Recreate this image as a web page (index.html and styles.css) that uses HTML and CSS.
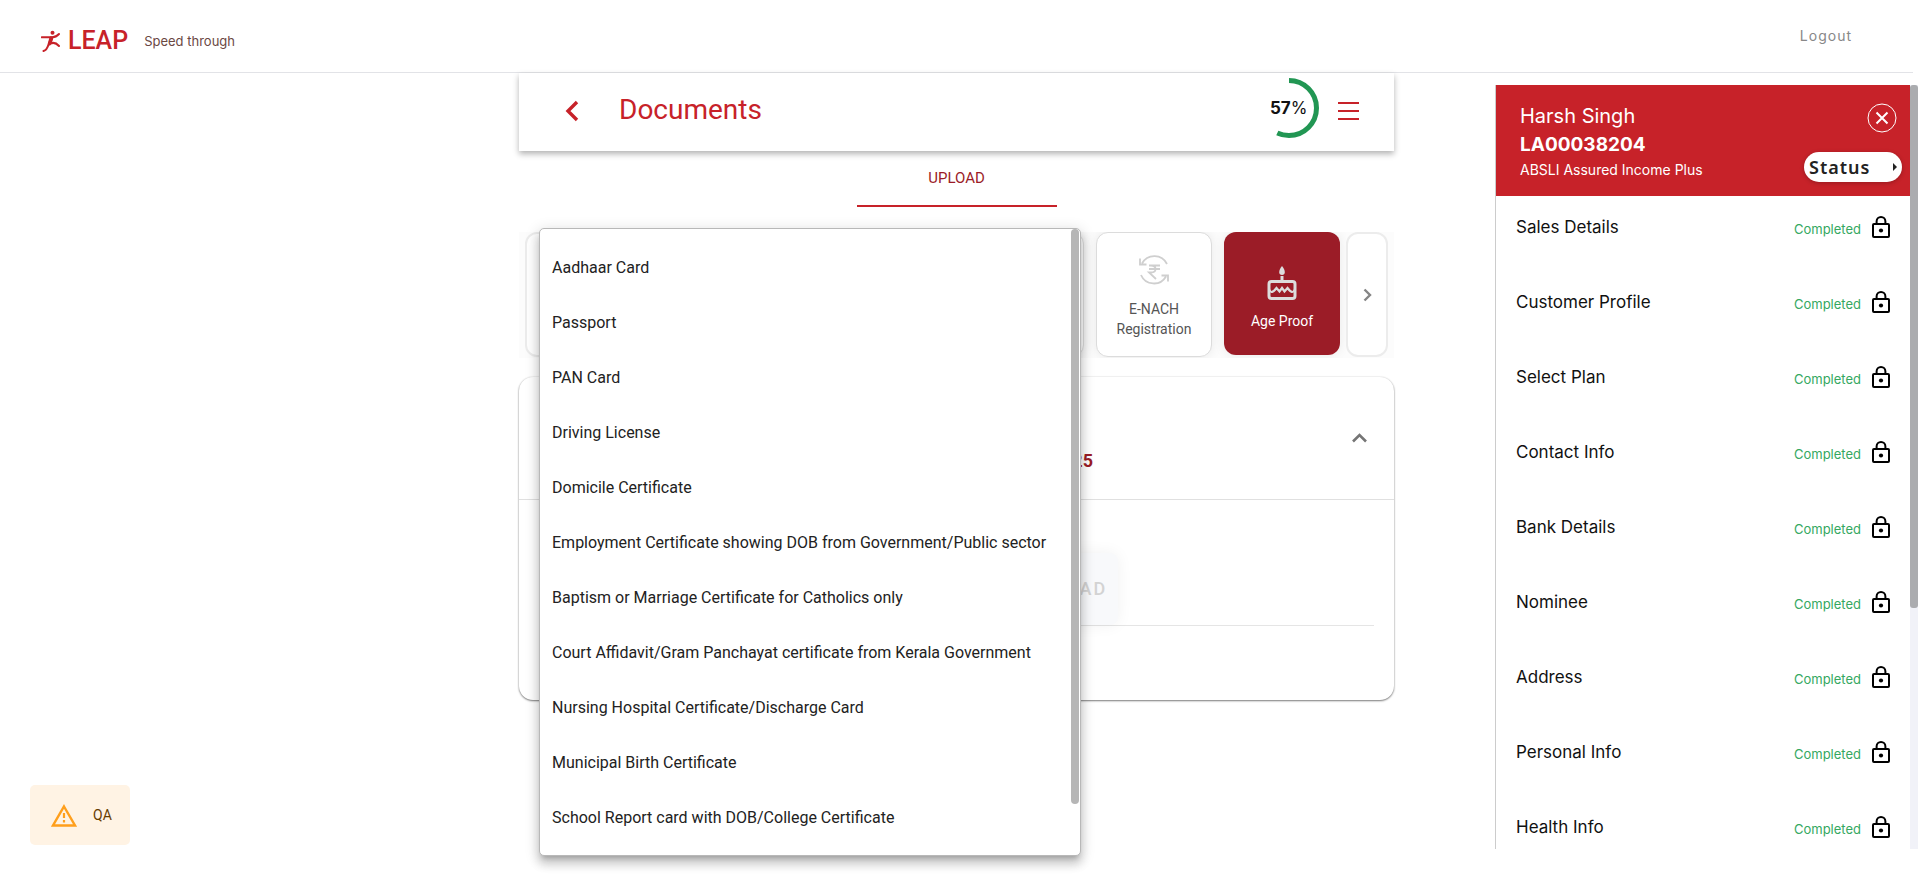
FILE: index.html
```html
<!DOCTYPE html>
<html lang="en">
<head>
<meta charset="utf-8">
<meta name="viewport" content="width=device-width, initial-scale=1">
<title>LEAP - Documents</title>
<link rel="stylesheet" href="styles.css">
</head>
<body>
<svg class="defs" width="0" height="0" aria-hidden="true">
  <symbol id="lock" viewBox="0 0 18 22">
    <path d="M4.600 8V5.400a4.400 4.400 0 0 1 8.800 0V8" fill="none" stroke="currentColor" stroke-width="2"/>
    <rect x="1" y="8" width="16" height="13" rx="1" fill="none" stroke="currentColor" stroke-width="2"/>
    <circle cx="9" cy="14.500" r="2.100" fill="currentColor"/>
  </symbol>
</svg>
<header class="topbar">
  <div class="brand">
    <svg class="brand-icon" viewBox="0 0 19 22" width="19" height="22" fill="none" stroke="#c72229" stroke-width="2" stroke-linecap="round" stroke-linejoin="round" aria-hidden="true">
      <circle cx="11.500" cy="2.800" r="2" fill="#c72229" stroke="none"/>
      <path d="M.8 7.200H11.500Q15 7.200 18 4"/>
      <path d="M9.500 7.500 7.500 14.500Q6 20 2.500 21"/>
      <path d="M11.500 7.500 9.500 13.500Q14 11.500 18 16"/>
      <path d="M10.500 8 8.500 14" stroke-width="3"/>
    </svg>
    <span class="brand-name">LEAP</span>
    <span class="brand-tag">Speed through</span>
  </div>
  <button class="logout" type="button">Logout</button>
</header>

<div class="page">
  <div class="notice" role="status">
    <svg viewBox="0 0 26 23" width="26" height="23" aria-hidden="true">
      <path d="M13 2.500 24 21.500H2Z" fill="none" stroke="#ff9f1c" stroke-width="2.400"/>
      <path d="M13 9v5M13 16v2.500" stroke="#ff9f1c" stroke-width="2.200"/>
    </svg>
    <span>QA</span>
  </div>

  <main class="main">
    <div class="titlebar">
      <button class="icon-btn" type="button" aria-label="Back">
        <svg viewBox="0 0 14 22" width="14" height="22"><path d="M12 2 3 11l9 9" fill="none" stroke="#c72229" stroke-width="3.400"/></svg>
      </button>
      <h1>Documents</h1>
      <div class="progress">
        <svg viewBox="0 0 60 60" width="60" height="60" aria-hidden="true">
          <circle cx="30" cy="30" r="27.500" fill="none" stroke="#219653" stroke-width="5" pathLength="100" stroke-dasharray="57 100" transform="rotate(-90 30 30)"/>
        </svg>
        <span class="progress-text"><b>57</b>%</span>
      </div>
      <button class="icon-btn" type="button" aria-label="Menu">
        <svg viewBox="0 0 21 18" width="21" height="18"><path d="M0 1h21M0 9h21M0 17h21" stroke="#c72229" stroke-width="2"/></svg>
      </button>
    </div>

    <div class="tabs"><button class="tab" type="button">UPLOAD</button></div>

    <div class="strip">
      <button class="nav-btn" type="button" aria-label="Previous"></button>
      <div class="tiles">
        <button class="tile" type="button" aria-label="Document"></button>
        <button class="tile" type="button">
          <svg viewBox="0 0 30 30" width="30" height="30" fill="none" stroke="#cfcfcf" stroke-width="1.800" aria-hidden="true">
            <path d="M28 9A14 14 0 0 0 3 8.500M1 3.500V9.500H7.500M2 20a14 14 0 0 0 25 1.500M22.500 20.500H29V26.500"/>
            <path d="M10 10.500H21M10 14H21M12 10.500C18 10.500 18 17.500 12 17.500H10L17 24"/>
          </svg>
          <span>E-NACH Registration</span>
        </button>
        <button class="tile tile-active" type="button">
          <svg viewBox="0 0 30 34" width="30" height="34" fill="none" stroke="#dcdcdc" stroke-width="3" aria-hidden="true">
            <path d="M15 0C19 5 18.500 9 15 9S11 5 15 0Z" fill="#dcdcdc" stroke="none"/>
            <path d="M15 10v5"/>
            <rect x="2" y="15.500" width="26" height="17" rx="2.500"/>
            <path d="M2 23.500C4 27.500 6 26.500 9.500 22L12.500 25.500 15 22 17.500 25.500 20.500 22C24 26.500 26 27.500 28 23.500" stroke-width="2.200"/>
          </svg>
          <span>Age Proof</span>
        </button>
      </div>
      <button class="nav-btn" type="button" aria-label="Next">
        <svg viewBox="0 0 9 14" width="9" height="14"><path d="M1.500 1.500 7 7 1.500 12.500" fill="none" stroke="#858585" stroke-width="2.400"/></svg>
      </button>
    </div>

    <section class="card">
      <div class="card-head">
        <span class="date">25</span>
        <button class="icon-btn collapse" type="button" aria-label="Collapse">
          <svg viewBox="0 0 15 10" width="15" height="10"><path d="M1 8.500 7.500 2 14 8.500" fill="none" stroke="#757575" stroke-width="2.600"/></svg>
        </button>
      </div>
      <div class="card-body">
        <div class="upload-row"><button class="upload" type="button" disabled>UPLOAD</button></div>
      </div>
    </section>

    <div class="menu">
      <ul class="options" role="listbox" aria-label="Document type">
        <li role="option">Aadhaar Card</li>
        <li role="option">Passport</li>
        <li role="option">PAN Card</li>
        <li role="option">Driving License</li>
        <li role="option">Domicile Certificate</li>
        <li role="option">Employment Certificate showing DOB from Government/Public sector</li>
        <li role="option">Baptism or Marriage Certificate for Catholics only</li>
        <li role="option">Court Affidavit/Gram Panchayat certificate from Kerala Government</li>
        <li role="option">Nursing Hospital Certificate/Discharge Card</li>
        <li role="option">Municipal Birth Certificate</li>
        <li role="option">School Report card with DOB/College Certificate</li>
      </ul>
      <div class="menu-scroll"></div>
    </div>
  </main>

  <aside class="side">
    <div class="side-body">
      <div class="profile">
        <div class="profile-text">
          <div class="name">Harsh Singh</div>
          <div class="lead">LA00038204</div>
          <div class="plan">ABSLI Assured Income Plus</div>
        </div>
        <div class="profile-actions">
          <button class="close" type="button" aria-label="Close">
            <svg viewBox="0 0 30 30" width="30" height="30" fill="none" stroke="#fff"><circle cx="15" cy="15" r="14"/><path d="M9.500 9.500l11 11M20.500 9.500l-11 11" stroke-width="2"/></svg>
          </button>
          <button class="status" type="button">Status
            <svg viewBox="0 0 4 8" width="4" height="8" aria-hidden="true"><path d="M0 0 4 4 0 8Z" fill="#222"/></svg>
          </button>
        </div>
      </div>
      <ul class="steps">
        <li><a href="#">Sales Details</a><span class="done">Completed</span><svg class="lock"><use href="#lock"/></svg></li>
        <li><a href="#">Customer Profile</a><span class="done">Completed</span><svg class="lock"><use href="#lock"/></svg></li>
        <li><a href="#">Select Plan</a><span class="done">Completed</span><svg class="lock"><use href="#lock"/></svg></li>
        <li><a href="#">Contact Info</a><span class="done">Completed</span><svg class="lock"><use href="#lock"/></svg></li>
        <li><a href="#">Bank Details</a><span class="done">Completed</span><svg class="lock"><use href="#lock"/></svg></li>
        <li><a href="#">Nominee</a><span class="done">Completed</span><svg class="lock"><use href="#lock"/></svg></li>
        <li><a href="#">Address</a><span class="done">Completed</span><svg class="lock"><use href="#lock"/></svg></li>
        <li><a href="#">Personal Info</a><span class="done">Completed</span><svg class="lock"><use href="#lock"/></svg></li>
        <li><a href="#">Health Info</a><span class="done">Completed</span><svg class="lock"><use href="#lock"/></svg></li>
      </ul>
    </div>
    <div class="side-scroll"><div class="side-thumb"></div></div>
  </aside>
</div>
</body>
</html>
```
FILE: styles.css
```css
* { box-sizing: border-box; }
body {
  margin: 0;
  padding-right: 7px;
  height: 100vh;
  display: flex;
  flex-direction: column;
  overflow: hidden;
  background: #fff;
  color: #222;
  font-family: Roboto, "Liberation Sans", sans-serif;
}
button { font: inherit; color: inherit; background: none; border: 0; padding: 0; }
ul { list-style: none; margin: 0; padding: 0; }
svg { display: block; flex: none; }
.defs { position: absolute; }

.topbar {
  flex: none;
  display: flex;
  align-items: center;
  justify-content: space-between;
  height: 73px;
  padding: 0 61px 0 41px;
  border-bottom: 1px solid #e2e3e7;
}
.brand { display: flex; align-items: center; padding-top: 9px; }
.brand-name { margin-left: 8px; color: #c72229; font-size: 25px; line-height: 32px; font-weight: 500; }
.brand-tag { margin-left: 16px; color: #6b4843; font: 13px/20px Inter, sans-serif; }
.logout { color: #888; font: 14px/20px Inter, sans-serif; letter-spacing: 1px; }

.page {
  flex: 1;
  min-height: 0;
  display: grid;
  grid-template-columns: minmax(0, 1fr) minmax(0, 875px) minmax(0, 1fr);
}
.notice {
  align-self: end;
  justify-self: start;
  display: flex;
  align-items: center;
  gap: 16px;
  height: 60px;
  margin: 0 0 30px 30px;
  padding: 0 18px 0 21px;
  border-radius: 5px;
  background: #fff3e4;
  color: #663c00;
  font-size: 14px;
  line-height: 24px;
}

.main { position: relative; }
.titlebar {
  display: flex;
  align-items: center;
  height: 78px;
  padding: 0 35px 8px 46px;
  box-shadow: 0 3px 6px rgba(0, 0, 0, .3);
}
.titlebar h1 { flex: 1; margin: 0; padding-left: 40px; padding-top: 4px; color: #c72229; font-size: 28px; line-height: 40px; font-weight: 400; }
.titlebar .icon-btn { padding-top: 5px; }
.progress { display: grid; align-items: center; margin-right: 19px; }
.progress svg, .progress-text { grid-area: 1 / 1; }
.progress-text { padding-left: 11px; color: #111; font: 17px/24px Inter, sans-serif; }

.tabs { display: flex; justify-content: center; height: 56px; }
.tab { width: 200px; border-bottom: 2px solid #c72229; color: #9b1c27; font-size: 15px; line-height: 24px; }

.strip { display: flex; height: 126px; margin-top: 25px; padding: 0 6px; background: #fcfcfc; }
.tiles { flex: 1; display: flex; justify-content: flex-end; align-items: flex-start; gap: 12px; padding: 0 6px; overflow: hidden; }
.tile {
  flex: none;
  display: flex;
  flex-direction: column;
  align-items: center;
  justify-content: center;
  gap: 14px;
  width: 116px;
  height: 125px;
  padding: 4px 16px 0;
  border: 1px solid #dcdcdc;
  border-radius: 12px;
  background: #fff;
  box-shadow: 0 0 12px rgba(0, 0, 0, .08);
  color: #555;
  font-size: 14px;
  line-height: 20px;
}
.tile-active { height: 123px; padding-top: 10px; gap: 11px; border: 0; background: #9b1c27; color: #fff; }
.nav-btn {
  flex: none;
  display: flex;
  align-items: center;
  justify-content: center;
  width: 42px;
  height: 125px;
  border: 2px solid #ececec;
  border-radius: 12px;
  background: #fff;
}

.card { margin-top: 19px; border-radius: 14px; box-shadow: 0 1px 2px rgba(0, 0, 0, .5), 0 0 2px rgba(0, 0, 0, .12); }
.card-head { display: grid; grid-template-columns: 574px 1fr; align-items: center; height: 123px; border-bottom: 1px solid #e0e0e0; }
.date { justify-self: end; padding-top: 46px; color: #9b1c27; font-size: 18px; line-height: 24px; font-weight: 700; }
.collapse { justify-self: end; margin-right: 27px; }
.card-body { height: 200px; padding: 53px 20px 0; }
.upload-row { border-bottom: 1px solid #e5e5e5; padding-left: 471px; }
.upload { width: 108px; height: 72px; padding-left: 6px; border-radius: 8px; background: #f8f9fb; color: #d3d3d3; font-size: 18px; line-height: 24px; font-weight: 500; letter-spacing: 2px; box-shadow: 0 0 16px rgba(0, 0, 0, .06); }

.menu {
  position: absolute;
  left: 20px;
  top: 155px;
  width: 542px;
  height: 628px;
  display: flex;
  border: 1px solid #b8b8b8;
  border-radius: 5px;
  background: #fff;
  box-shadow: 0 5px 5px -3px rgba(0, 0, 0, .2), 0 8px 10px 1px rgba(0, 0, 0, .14), 0 3px 14px 2px rgba(0, 0, 0, .12);
}
.options { flex: 1; min-width: 0; padding: 11px 12px; overflow: hidden; }
.options li { height: 55px; font-size: 16px; line-height: 56px; white-space: nowrap; }
.menu-scroll { flex: none; width: 8px; height: 575px; margin-right: 1px; border-radius: 4px; background: #b6b6b6; }

.side {
  justify-self: end;
  display: flex;
  width: 423px;
  height: calc(100vh - 111px);
  margin: 12px -5px 0 0;
  border-left: 1px solid #ccc;
  font-family: Inter, "Liberation Sans", sans-serif;
}
.side-body { flex: 1; overflow: hidden; }
.profile { display: flex; justify-content: space-between; height: 111px; padding: 17px 8px 0 24px; background: #c72229; color: #fff; }
.name { font-size: 20px; line-height: 28px; }
.lead { font-size: 19px; line-height: 30px; font-weight: 700; }
.plan { font-size: 14px; line-height: 20px; }
.profile-actions { display: flex; flex-direction: column; align-items: flex-end; gap: 19px; padding-top: 1px; }
.close { margin-right: 5px; }
.status {
  display: flex;
  align-items: center;
  justify-content: space-between;
  width: 98px;
  height: 30px;
  padding: 0 5px;
  border-radius: 15px;
  background: #fff;
  box-shadow: 0 1px 4px rgba(0, 0, 0, .25);
  color: #222;
  font: 600 18px/24px "Noto Sans", sans-serif;
  letter-spacing: 1px;
}
.steps { display: flex; flex-direction: column; gap: 13px; }
.steps li { flex: none; display: flex; align-items: center; height: 62px; padding: 0 20px; }
.steps a { flex: 1; color: #111; text-decoration: none; font-size: 17px; line-height: 24px; }
.done { color: #34a861; font-size: 13px; line-height: 20px; padding-top: 3px; }
.lock { width: 18px; height: 22px; margin-left: 11px; color: #000; }
.side-scroll { width: 8px; background: #f1f2f8; }
.side-thumb { height: 68.500%; border-radius: 3px; background: #abacaf; }
```
